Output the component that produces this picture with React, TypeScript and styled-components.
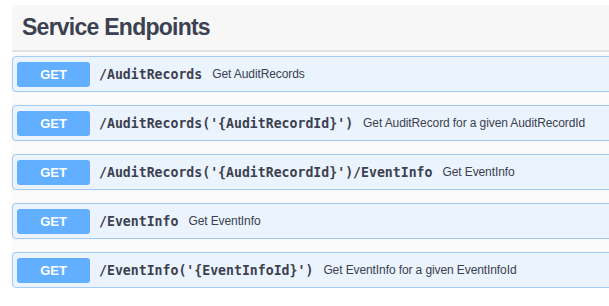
import styled, { createGlobalStyle } from "styled-components"

const GlobalStyle = createGlobalStyle`
  html, body {
    margin: 0;
    padding: 0;
    background: #ffffff;
    overflow: hidden;
  }
`

const Styled = {
  Page: styled.div`
    width: 640px;
    padding: 5px 0 0 12px;
    font-family: "Liberation Sans", Arial, sans-serif;
    color: #3b4151;
    background: #ffffff;
  `,
  Header: styled.div`
    display: flex;
    align-items: center;
    height: 45px;
    padding: 0 0 0 10px;
    background: #f7f7f7;
    border-bottom: 2px solid #e2e2e2;
  `,
  Title: styled.h2`
    margin: 0;
    font-family: "Liberation Sans", Arial, sans-serif;
    font-weight: 700;
    font-size: 23px;
    letter-spacing: -0.75px;
    color: #3b4151;
  `,
  List: styled.div`
    display: flex;
    flex-direction: column;
    gap: 13px;
    padding: 4px 0 0 0;
    background: #fbfbfb;
  `,
  Operation: styled.div`
    display: flex;
    align-items: center;
    height: 34px;
    padding: 0 4px;
    background: #ebf3fc;
    border: 1px solid #a6cbf2;
    border-radius: 4px;
    box-shadow: 0 0 2px rgba(0, 0, 0, 0.08);
  `,
  Method: styled.span`
    display: flex;
    align-items: center;
    justify-content: center;
    width: 73px;
    height: 25px;
    border-radius: 3px;
    background: #61affe;
    color: #ffffff;
    font-family: "Liberation Sans", Arial, sans-serif;
    font-weight: 700;
    font-size: 13px;
  `,
  Path: styled.span`
    margin: 0 10px 0 9px;
    font-family: "DejaVu Sans Mono", "Liberation Mono", monospace;
    font-weight: 700;
    font-size: 13.2px;
    color: #3b4151;
  `,
  Summary: styled.span`
    font-family: "Liberation Sans", Arial, sans-serif;
    font-size: 12px;
    letter-spacing: -0.1px;
    color: #3b4151;
  `,
}

const endpoints = [
  { path: "/AuditRecords", summary: "Get AuditRecords" },
  {
    path: "/AuditRecords('{AuditRecordId}')",
    summary: "Get AuditRecord for a given AuditRecordId",
  },
  {
    path: "/AuditRecords('{AuditRecordId}')/EventInfo",
    summary: "Get EventInfo",
  },
  { path: "/EventInfo", summary: "Get EventInfo" },
  {
    path: "/EventInfo('{EventInfoId}')",
    summary: "Get EventInfo for a given EventInfoId",
  },
]

export default function App() {
  return (
    <>
      <GlobalStyle />
      <Styled.Page>
        <Styled.Header>
          <Styled.Title>Service Endpoints</Styled.Title>
        </Styled.Header>
        <Styled.List>
          {endpoints.map((e) => (
            <Styled.Operation key={e.path}>
              <Styled.Method>GET</Styled.Method>
              <Styled.Path>{e.path}</Styled.Path>
              <Styled.Summary>{e.summary}</Styled.Summary>
            </Styled.Operation>
          ))}
        </Styled.List>
      </Styled.Page>
    </>
  )
}
